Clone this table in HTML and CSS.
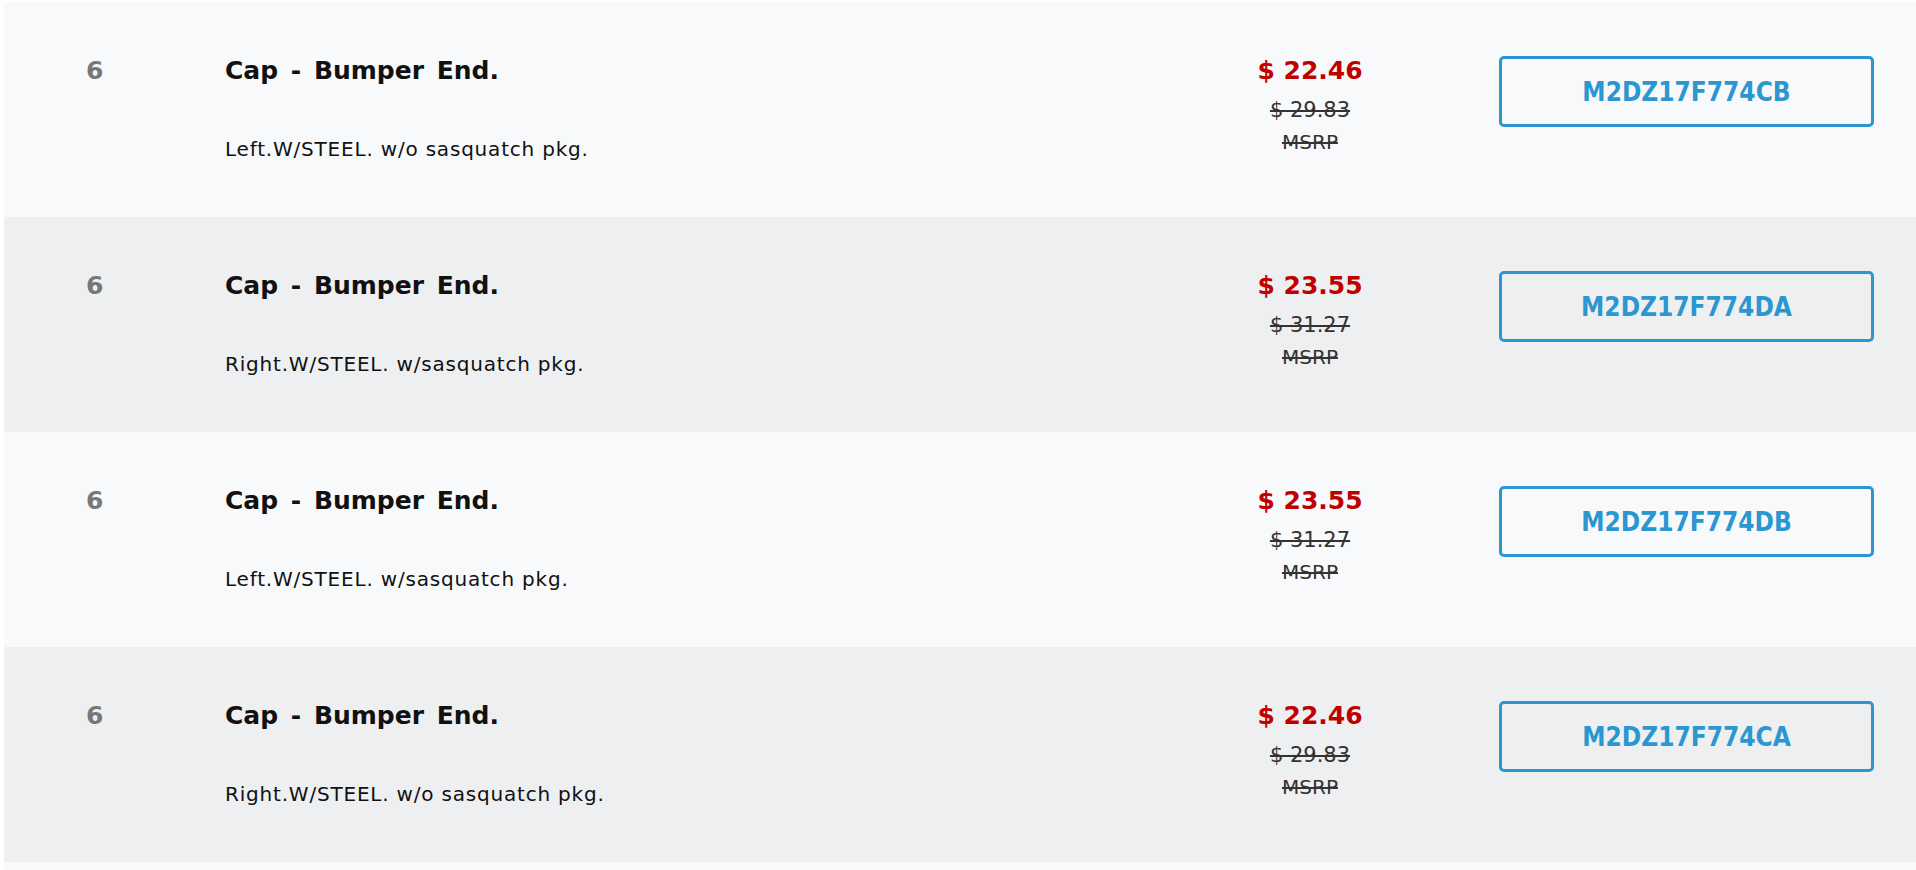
FILE: index.html
```html
<!DOCTYPE html>
<html lang="en">
<head>
    <meta charset="UTF-8">
    <meta name="viewport" content="width=device-width, initial-scale=1.0">
    <title>Parts List</title>
    <link rel="stylesheet" href="styles.css">
</head>
<body>
    <div class="parts-list">
        <div class="part-row">
            <div class="part-qty">6</div>
            <div class="part-info">
                <div class="part-name">Cap - Bumper End.</div>
                <div class="part-desc">Left.W/STEEL. w/o sasquatch pkg.</div>
            </div>
            <div class="part-price">
                <div class="price-now">$ 22.46</div>
                <div class="price-old">$ 29.83</div>
                <div class="price-label">MSRP</div>
            </div>
            <div class="part-action">
                <button class="part-btn">M2DZ17F774CB</button>
            </div>
        </div>
        <div class="part-row alt">
            <div class="part-qty">6</div>
            <div class="part-info">
                <div class="part-name">Cap - Bumper End.</div>
                <div class="part-desc">Right.W/STEEL. w/sasquatch pkg.</div>
            </div>
            <div class="part-price">
                <div class="price-now">$ 23.55</div>
                <div class="price-old">$ 31.27</div>
                <div class="price-label">MSRP</div>
            </div>
            <div class="part-action">
                <button class="part-btn">M2DZ17F774DA</button>
            </div>
        </div>
        <div class="part-row">
            <div class="part-qty">6</div>
            <div class="part-info">
                <div class="part-name">Cap - Bumper End.</div>
                <div class="part-desc">Left.W/STEEL. w/sasquatch pkg.</div>
            </div>
            <div class="part-price">
                <div class="price-now">$ 23.55</div>
                <div class="price-old">$ 31.27</div>
                <div class="price-label">MSRP</div>
            </div>
            <div class="part-action">
                <button class="part-btn">M2DZ17F774DB</button>
            </div>
        </div>
        <div class="part-row alt">
            <div class="part-qty">6</div>
            <div class="part-info">
                <div class="part-name">Cap - Bumper End.</div>
                <div class="part-desc">Right.W/STEEL. w/o sasquatch pkg.</div>
            </div>
            <div class="part-price">
                <div class="price-now">$ 22.46</div>
                <div class="price-old">$ 29.83</div>
                <div class="price-label">MSRP</div>
            </div>
            <div class="part-action">
                <button class="part-btn">M2DZ17F774CA</button>
            </div>
        </div>
        <div class="part-row"></div>
    </div>
</body>
</html>
```

FILE: styles.css
```css
* {
    margin: 0;
    padding: 0;
    box-sizing: border-box;
}

body {
    font-family: 'DejaVu Sans', 'Noto Sans', sans-serif;
    background-color: #ffffff;
    color: #111;
    overflow: hidden;
}

.parts-list {
    padding: 2px 0 0 4px;
}

.part-row {
    display: grid;
    grid-template-columns: 221px 1fr 200px 506px;
    height: 215px;
    padding-top: 54px;
    background-color: #f8f9fb;
}

.part-row.alt {
    background-color: #eeeff1;
}

.part-qty {
    padding-left: 82px;
    font-size: 25px;
    line-height: 30px;
    font-weight: 700;
    color: #777;
}

.part-name {
    font-size: 25px;
    line-height: 30px;
    font-weight: 700;
    word-spacing: 4px;
    color: #111;
}

.part-desc {
    margin-top: 51px;
    font-size: 20px;
    line-height: 24px;
    letter-spacing: 0.8px;
    color: #111;
}

.part-price {
    text-align: center;
}

.price-now {
    font-size: 25px;
    line-height: 30px;
    font-weight: 700;
    color: #c00000;
}

.price-old {
    margin-top: 12px;
    font-size: 21px;
    line-height: 24px;
    color: #333;
    text-decoration: line-through;
}

.price-label {
    margin-top: 8px;
    font-size: 20px;
    line-height: 24px;
    color: #333;
    text-decoration: line-through;
}

.part-action {
    padding-left: 89px;
    padding-right: 42px;
}

.part-btn {
    display: block;
    width: 100%;
    height: 71px;
    background: transparent;
    border: 3px solid #2a97d1;
    border-radius: 5px;
    font-family: 'DejaVu Sans Condensed', 'DejaVu Sans', sans-serif;
    font-stretch: condensed;
    font-size: 26px;
    font-weight: 700;
    color: #2a97d1;
    cursor: pointer;
}
```
